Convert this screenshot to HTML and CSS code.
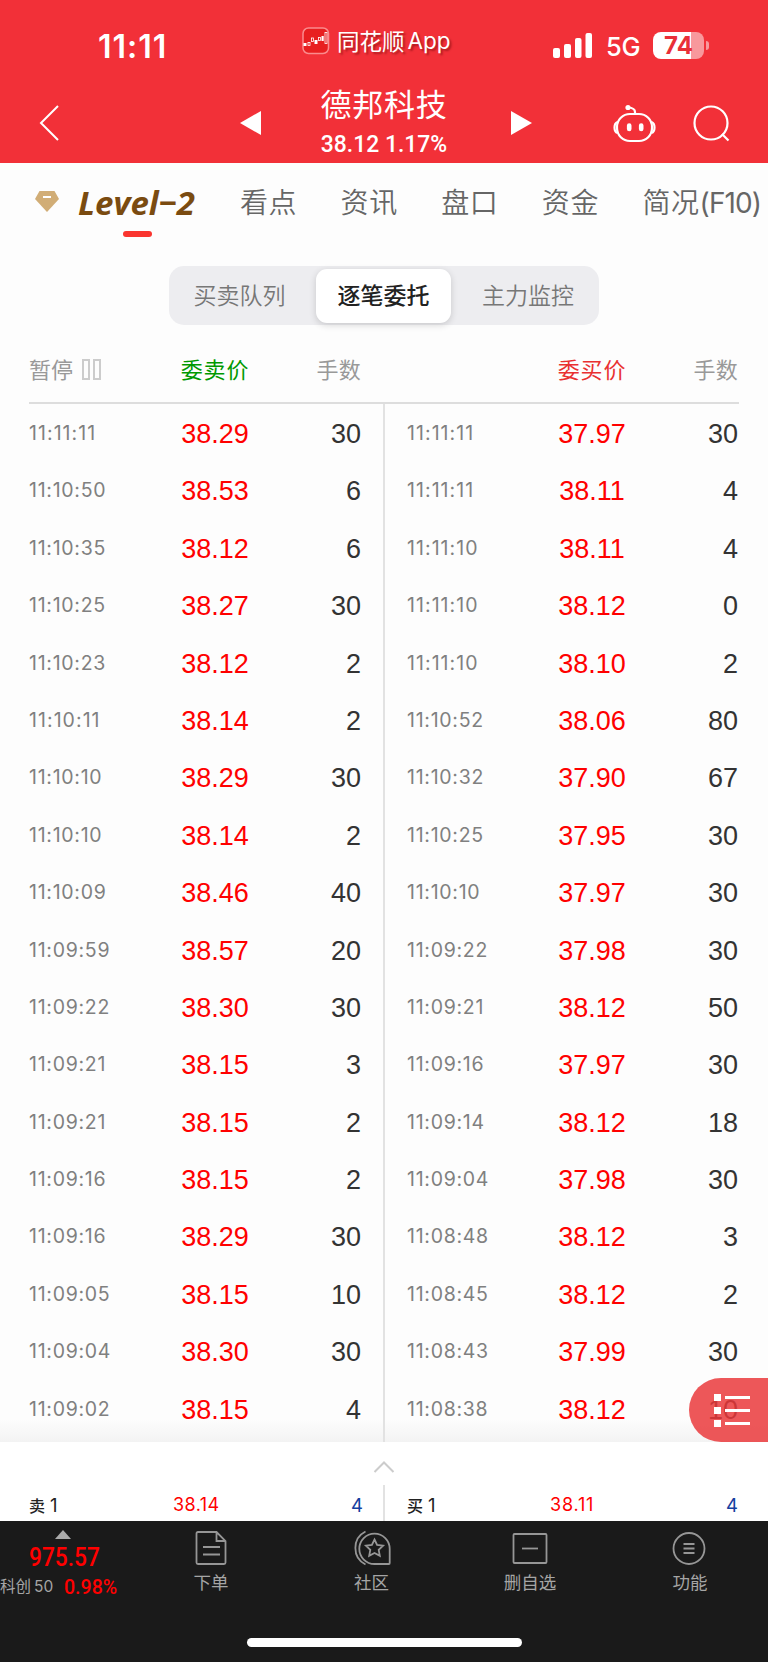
FILE: index.html
```html
<!DOCTYPE html>
<html lang="zh-CN">
<head>
<meta charset="utf-8">
<title>德邦科技</title>
<link rel="stylesheet" href="styles.css">
</head>
<body>
<div class="screen">
<header class="top">
  <div class="status">
    <div class="clock">11:11</div>
    <div class="app">
      <svg class="app-icon" width="28" height="28" viewBox="0 0 28 28"><rect x="1" y="1" width="25.500" height="25.500" rx="5.500" fill="#e81f20" stroke="#fa8b8d" stroke-width="1.500"/><g fill="#fff"><rect x="1.500" y="16" width="3" height="3"/><rect x="12.500" y="13" width="3" height="4"/><rect x="19.500" y="9" width="2.200" height="5"/></g><g fill="none" stroke="#fff" stroke-width=".8"><rect x="6" y="15.500" width="2" height="3"/><rect x="9.500" y="11" width="2" height="3.500"/><rect x="16.500" y="10.500" width="2" height="3"/><rect x="23" y="5.500" width="2" height="11"/></g></svg>
      <span class="app-name">同花顺</span><span class="app-latin">App</span>
    </div>
    <div class="signal">
      <svg width="40" height="26" viewBox="0 0 40 26" fill="#fff"><rect x="0" y="15" width="7" height="10" rx="2"/><rect x="11" y="11" width="7" height="14" rx="2"/><rect x="22" y="5" width="6.500" height="20" rx="2"/><rect x="32.500" y="0" width="6.500" height="25" rx="2"/></svg>
      <span class="net">5G</span>
      <span class="battery"><span class="level">74</span></span><span class="cap"></span>
    </div>
  </div>
  <div class="nav">
    <svg class="back" width="22" height="38" viewBox="0 0 22 38"><path d="M19 2 2 19l17 17" fill="none" stroke="#fff" stroke-width="2"/></svg>
    <svg class="prev" width="21" height="24" viewBox="0 0 21 24"><path d="M0 12 21 0v24z" fill="#fff"/></svg>
    <div class="stock"><h1>德邦科技</h1><p>38.12 1.17%</p></div>
    <svg class="next" width="21" height="24" viewBox="0 0 21 24"><path d="M21 12 0 0v24z" fill="#fff"/></svg>
    <svg class="robot" width="44" height="40" viewBox="0 0 44 40" fill="none" stroke="#fff" stroke-width="2.200"><rect x="4" y="10" width="35" height="27" rx="13"/><path d="M4.500 18Q1.500 19 1.500 23.500T4.500 29M38.500 18q3 1 3 5.500t-3 5.500"/><path d="M22 10V8q0-4-7-4.500"/><circle cx="15" cy="3.500" r="2.600" fill="#fff" stroke="none"/><path d="M16.200 21.500v3.500M28.200 21.500v3.500" stroke-width="4.600" stroke-linecap="round"/></svg>
    <svg class="search" width="38" height="38" viewBox="0 0 38 38" fill="none" stroke="#fff" stroke-width="2.200"><circle cx="18" cy="18" r="16.500"/><path d="m29 29 6.500 6.500"/></svg>
  </div>
</header>
<nav class="tabs">
  <div class="tab level-tab">
    <svg width="24" height="22" viewBox="0 0 24 22"><path d="M4.500 0h15L24 8 12 21 0 8z" fill="#d1ad76"/><path d="M8 6h8" stroke="#fff" stroke-width="2"/></svg>
    <span class="level-name">Level−2</span>
  </div>
  <span class="tab">看点</span><span class="tab">资讯</span><span class="tab">盘口</span><span class="tab">资金</span><span class="tab last">简况<i>(F10)</i></span>
</nav>
<div class="segments"><span>买卖队列</span><span class="on">逐笔委托</span><span>主力监控</span></div>
<div class="heads">
  <div class="head"><span class="pause">暂停<i class="bar"></i><i class="bar"></i></span><b class="sell">委卖价</b><span class="qty">手数</span></div>
  <div class="head right"><span></span><b class="buy">委买价</b><span class="qty">手数</span></div>
</div>
<main class="book">
<div class="side">
<div class="row"><time class="ones">11:11:11</time><b>38.29</b><span>30</span></div>
<div class="row"><time>11:10:50</time><b>38.53</b><span>6</span></div>
<div class="row"><time>11:10:35</time><b>38.12</b><span>6</span></div>
<div class="row"><time>11:10:25</time><b>38.27</b><span>30</span></div>
<div class="row"><time>11:10:23</time><b>38.12</b><span>2</span></div>
<div class="row"><time class="ones">11:10:11</time><b>38.14</b><span>2</span></div>
<div class="row"><time>11:10:10</time><b>38.29</b><span>30</span></div>
<div class="row"><time>11:10:10</time><b>38.14</b><span>2</span></div>
<div class="row"><time>11:10:09</time><b>38.46</b><span>40</span></div>
<div class="row"><time>11:09:59</time><b>38.57</b><span>20</span></div>
<div class="row"><time>11:09:22</time><b>38.30</b><span>30</span></div>
<div class="row"><time>11:09:21</time><b>38.15</b><span>3</span></div>
<div class="row"><time>11:09:21</time><b>38.15</b><span>2</span></div>
<div class="row"><time>11:09:16</time><b>38.15</b><span>2</span></div>
<div class="row"><time>11:09:16</time><b>38.29</b><span>30</span></div>
<div class="row"><time>11:09:05</time><b>38.15</b><span>10</span></div>
<div class="row"><time>11:09:04</time><b>38.30</b><span>30</span></div>
<div class="row"><time>11:09:02</time><b>38.15</b><span>4</span></div>
</div>
<div class="side right">
<div class="row"><time class="ones">11:11:11</time><b>37.97</b><span>30</span></div>
<div class="row"><time class="ones">11:11:11</time><b>38.11</b><span>4</span></div>
<div class="row"><time class="ones">11:11:10</time><b>38.11</b><span>4</span></div>
<div class="row"><time class="ones">11:11:10</time><b>38.12</b><span>0</span></div>
<div class="row"><time class="ones">11:11:10</time><b>38.10</b><span>2</span></div>
<div class="row"><time>11:10:52</time><b>38.06</b><span>80</span></div>
<div class="row"><time>11:10:32</time><b>37.90</b><span>67</span></div>
<div class="row"><time>11:10:25</time><b>37.95</b><span>30</span></div>
<div class="row"><time>11:10:10</time><b>37.97</b><span>30</span></div>
<div class="row"><time>11:09:22</time><b>37.98</b><span>30</span></div>
<div class="row"><time>11:09:21</time><b>38.12</b><span>50</span></div>
<div class="row"><time>11:09:16</time><b>37.97</b><span>30</span></div>
<div class="row"><time>11:09:14</time><b>38.12</b><span>18</span></div>
<div class="row"><time>11:09:04</time><b>37.98</b><span>30</span></div>
<div class="row"><time>11:08:48</time><b>38.12</b><span>3</span></div>
<div class="row"><time>11:08:45</time><b>38.12</b><span>2</span></div>
<div class="row"><time>11:08:43</time><b>37.99</b><span>30</span></div>
<div class="row"><time>11:08:38</time><b>38.12</b><span>10</span></div>
</div>
<div class="float"><svg width="36" height="34" viewBox="0 0 36 34" fill="#fff"><path d="M0 0h7v7H0zM0 13h7v7H0zM0 26h7v7H0zM11 2h25v3H11zM11 15h25v3H11zM11 28h25v3H11z"/></svg></div>
</main>
<section class="sheet">
  <svg class="up" width="22" height="12" viewBox="0 0 22 12"><path d="m1.500 11 9.500-9.500 9.500 9.500" fill="none" stroke="#ccc" stroke-width="2"/></svg>
  <div class="quotes">
    <div class="quote"><span class="q-name">卖<i>1</i></span><span class="q-price">38.14</span><span class="q-num">4</span></div>
    <div class="quote right"><span class="q-name">买<i>1</i></span><span class="q-price">38.11</span><span class="q-num">4</span></div>
  </div>
</section>
<footer class="bottom">
  <div class="index">
    <svg width="16" height="9" viewBox="0 0 16 9"><path d="M8 0l8 9H0z" fill="#aaa"/></svg>
    <strong>975.57</strong>
    <p><span>科创<i>50</i></span><em>0.98%</em></p>
  </div>
  <div class="items">
    <div class="item"><svg width="36" height="36" viewBox="0 0 36 36"><path d="M23.500 2H5q-1.500 0-1.500 1.500v29Q3.500 34 5 34h26q1.500 0 1.500-1.500V11zM23.500 2v9h9M10 17h17M10 24.500h17"/></svg><span>下单</span></div>
    <div class="item"><svg width="38" height="36" viewBox="0 0 38 36"><path d="M36 34H21.500a15.200 15.200 0 1 1 15.200-15.200V33q0 1-.7 1zM12.500 1.500a18.500 18.500 0 0 0 0 33M21.500 9.500l2.600 5.400 6 .8-4.400 4.200 1.100 5.900-5.300-2.800-5.300 2.800 1.100-5.900-4.400-4.200 6-.8z"/></svg><span>社区</span></div>
    <div class="item"><svg width="36" height="36" viewBox="0 0 36 36"><rect x="1.500" y="4" width="33" height="29" rx="1"/><path d="M10 18.500h16"/></svg><span>删自选</span></div>
    <div class="item"><svg width="36" height="36" viewBox="0 0 36 36"><circle cx="17" cy="18.500" r="15.500"/><path d="M11.500 14h11M11.500 18.500h11M11.500 23h11"/></svg><span>功能</span></div>
  </div>
  <div class="home"></div>
</footer>
</div>
</body>
</html>
```
FILE: styles.css
```css
* { box-sizing: border-box; }
body { margin: 0; font-family: Inter, "Noto Sans CJK SC", sans-serif; color: #333; background: #fdfdfd; }
i, em { font-style: normal; }
b { font-weight: 400; }
p, h1 { margin: 0; }
svg { display: block; flex: none; }
.screen { width: 768px; height: 1662px; display: flex; flex-direction: column; overflow: hidden; white-space: nowrap; }
.top { height: 163px; background: #f23038; color: #fff; flex: none; }
.status { height: 84px; display: grid; grid-template-columns: 302px 251px 1fr; }
.clock { padding: 27px 0 0 98px; font: 600 32px/39px Inter, sans-serif; letter-spacing: 1px; }
.app { display: flex; align-items: center; height: 28px; margin-top: 27px; text-shadow: 2px 2px 2px rgba(90, 0, 0, .45); }
.app-name { margin-left: 7px; margin-top: -3px; font: 400 22.500px/28px "Noto Sans CJK SC", sans-serif; }
.app-latin { margin-left: 3px; font: 400 22.500px/28px Inter, sans-serif; }
.signal { display: flex; height: 27px; margin-top: 32px; align-items: center; }
.net { flex: none; width: 60px; padding: 2px 0 0 13px; font: 500 25.500px/30px Inter, sans-serif; letter-spacing: -.2px; }
.battery { flex: none; width: 51px; height: 27px; border-radius: 8px; background: linear-gradient(90deg, #fff 38px, #f8989c 38px); }
.level { display: block; text-align: center; font: 700 24px/27px Inter, sans-serif; color: #e92f38; }
.cap { width: 3px; height: 9px; margin-left: 2px; border-radius: 0 5px 5px 0; background: #f8989c; }
.nav { height: 79px; display: grid; grid-template-columns: 240px 61px 166px 146px 79px 1fr; align-items: start; }
.back { margin: 20px 0 0 39px; }
.prev { margin-top: 27px; }
.stock { text-align: center; }
.stock h1 { font: 400 31px/42px "Noto Sans CJK SC", sans-serif; letter-spacing: .8px; margin-top: -2px; }
.stock p { font: 500 24.500px/28px Roboto, sans-serif; margin-top: 6px; transform: scaleX(.935); }
.next { margin: 27px 0 0 44px; }
.robot { margin-top: 20px; }
.search { margin: 21px 0 0 1px; }
.tabs { height: 103px; flex: none; display: flex; padding: 17px 0 0 35px; font-size: 28px; line-height: 46px; color: #666; }
.tab { width: 100.600px; font-family: Inter, "Noto Sans CJK SC", sans-serif; font-weight: 350; letter-spacing: .6px; }
.last i { font-weight: 400; letter-spacing: -.9px; }
.tab.level-tab { width: 205px; display: flex; position: relative; }
.level-tab svg { margin-top: 11px; }
.level-name { margin: 0 0 0 19px; font: italic 700 33px/46px "Open Sans", sans-serif; color: #7a4b10; letter-spacing: 0; }
.level-tab::after { content: ""; position: absolute; left: 88px; top: 51px; width: 29px; height: 6px; border-radius: 3px; background: #fa352f; }
.segments { width: 430px; height: 59px; flex: none; margin: 0 0 0 169px; padding: 3px; display: grid; grid-template-columns: 144px 135px 1fr; border-radius: 15px; background: #ededf0; text-align: center; font-size: 23px; line-height: 54px; color: #777; font-weight: 350; }
.segments span:first-child { padding-right: 9px; }
.segments span:last-child { padding-left: 9px; }
.segments .on { background: #fff; border-radius: 11px; color: #222; font-weight: 500; box-shadow: 0 2px 7px rgba(0, 0, 0, .16); }
.heads { width: 710px; height: 79px; flex: none; margin-left: 29px; padding-top: 25px; display: grid; grid-template-columns: 355px 355px; border-bottom: 2px solid #ddd; font-size: 22px; line-height: 40px; color: #999; }
.head, .row, .quote { display: grid; grid-template-columns: 137px 98px 97px; }
.head { align-items: start; }
.right .row, .head.right, .quote.right { grid-template-columns: 136px 98px 97px; }
.head.right { padding-left: 23px; }
.head b { text-align: center; letter-spacing: .8px; }
.sell { color: #090; }
.buy { color: #e93030; }
.qty { text-align: right; letter-spacing: .3px; }
.pause { display: flex; align-items: center; }
.bar { width: 8px; height: 21px; margin: -1px 0 0 3px; border: 2px solid #ccc; }
.bar:nth-child(1) { margin-left: 9px; }
.book { position: relative; height: 1038px; flex: none; padding: 2px 29px 0; display: grid; grid-template-columns: 354px 356px; background: linear-gradient(#fdfdfd 1015px, #f3f3f3 1038px); }
.book .right { border-left: 2px solid #e2e2e2; margin-top: -2px; padding-top: 2px; padding-left: 22px; }
.row { height: 57.400px; line-height: 57px; }
.row time { font: 400 19.500px/55px Inter, sans-serif; color: #808080; letter-spacing: .72px; }
.row .ones { letter-spacing: 1.050px; }
.row b { font: 400 27px/57px "Liberation Sans", sans-serif; color: #f00; text-align: center; }
.row span { font: 400 27px/57px "Liberation Sans", sans-serif; color: #333; text-align: right; }
.float { position: absolute; right: 0; bottom: 0; width: 79px; height: 64px; padding: 16px 0 0 25px; border-radius: 32px 0 0 32px; background: rgba(233, 55, 57, .84); }
.sheet { height: 79px; flex: none; padding-top: 19px; background: #fff; }
.up { margin: 0 auto; }
.quotes { height: 36px; margin: 12px 29px 0; display: grid; grid-template-columns: 354px 356px; font-size: 19px; line-height: 40px; color: #222; }
.quote.right { border-left: 2px solid #e2e2e2; padding-left: 22px; }
.q-name { font-size: 16px; font-weight: 500; }
.q-name i { margin-left: 5px; font-size: 18.500px; font-weight: 400; }
.q-price { color: #f00; font: 400 18px/40px Inter, sans-serif; letter-spacing: .4px; padding-left: 7px; }
.right .q-price { letter-spacing: .8px; }
.q-num { color: #1540a0; text-align: right; font-size: 18.500px; }
.quote:first-child .q-num { margin-right: -2px; }
.bottom { position: relative; height: 141px; flex: none; background: #1a1a1a; color: #a5a5a5; display: grid; grid-template-columns: 127px 1fr; }
.index { padding-top: 9px; }
.index svg { margin-left: 55px; }
.index strong { display: block; margin-top: 6px; padding-left: 29px; font: 500 25px/26px Roboto, sans-serif; color: #f00; transform: scaleX(.91); transform-origin: 29px 50%; }
.index p { display: flex; align-items: center; margin-top: 1px; line-height: 28px; }
.index p span { width: 64px; font-size: 15.500px; padding-top: 1px; }
.index i { margin-left: 3px; }
.index em { font: 500 21px/28px Roboto, sans-serif; color: #f00; transform: scaleX(.93); transform-origin: 0 50%; }
.items { display: grid; grid-template-columns: 168px 153px 164px 156px; padding-top: 9px; }
.item { display: flex; flex-direction: column; align-items: center; font-size: 17.500px; line-height: 26px; }
.item svg { fill: none; stroke: #969696; stroke-width: 1.800; }
.item span { margin-top: 4px; }
.home { position: absolute; left: 247px; top: 117px; width: 275px; height: 9px; border-radius: 5px; background: #fff; }
```
